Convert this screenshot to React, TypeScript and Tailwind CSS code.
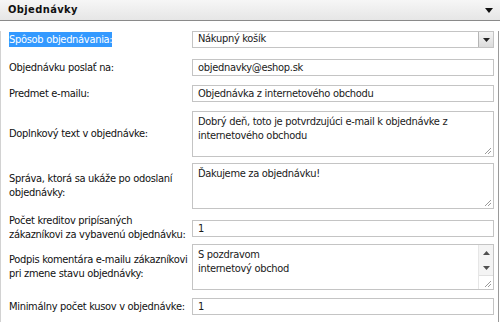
import React from "react";

const font = { fontFamily: '"DejaVu Sans Condensed", "DejaVu Sans", sans-serif' };

function Grip() {
  return (
    <svg className="absolute right-[1px] bottom-[1px]" width="9" height="9" viewBox="0 0 9 9">
      <path d="M8 2 L2 8 M8 5 L5 8" stroke="#9a9a9a" strokeWidth="1" />
    </svg>
  );
}

function Input({ value }: { value: string }) {
  return (
    <div className="w-[302px] h-[17px] border border-[#c4c4c4] bg-white px-[5px] text-[11px] leading-[15px] tracking-[-0.3px] text-[#1a1a1a]">
      {value}
    </div>
  );
}

function Area({ lines, scroll }: { lines: string[]; scroll?: boolean }) {
  return (
    <div className="relative w-[302px] h-[46px] border border-[#c4c4c4] bg-white px-[5px] pt-[3px] text-[11px] leading-[14px] tracking-[-0.3px] text-[#1a1a1a]">
      {lines.map((l, i) => (
        <div key={i}>{l}</div>
      ))}
      {scroll ? (
        <div className="absolute right-0 top-0 bottom-0 w-[15px] flex flex-col bg-[#f4f4f4] border-l border-[#e6e6e6]">
          <div className="h-[15px] flex items-center justify-center">
            <svg width="7" height="4" viewBox="0 0 7 4">
              <path d="M0 4 L3.5 0 L7 4 Z" fill="#505050" />
            </svg>
          </div>
          <div className="h-[15px] flex items-center justify-center">
            <svg width="7" height="4" viewBox="0 0 7 4">
              <path d="M0 0 L7 0 L3.5 4 Z" fill="#505050" />
            </svg>
          </div>
          <div className="flex-1 bg-white border-t border-[#e0e0e0]" />
        </div>
      ) : null}
      <Grip />
    </div>
  );
}

function Row({
  label,
  children,
  mt,
}: {
  label: React.ReactNode;
  children: React.ReactNode;
  mt: string;
}) {
  return (
    <div className={`flex items-center ${mt}`}>
      <div className="w-[191px] pl-[8px] whitespace-nowrap text-[11px] leading-[14px] tracking-[-0.3px] text-[#111]">
        {label}
      </div>
      {children}
    </div>
  );
}

export default function App() {
  return (
    <div className="w-[500px] h-[322px] bg-white overflow-hidden" style={font}>
      <div className="h-[21px] flex items-center justify-between pl-[8px] pr-[7px] bg-gradient-to-b from-[#f6f6f6] to-[#e6e6e6] border-b border-[#8a8a8a]">
        <span className="text-[11px] font-bold tracking-[0.4px] text-[#111]">Objednávky</span>
        <svg width="8" height="5" viewBox="0 0 8 5">
          <path d="M0 0 L8 0 L4 5 Z" fill="#111" />
        </svg>
      </div>
      <div className="h-[301px] border-l border-r border-[#d2d2d2] border-r-[#9a9a9a] mr-[1px]">
        <Row
          mt="mt-[10px]"
          label={<span className="bg-[#3399ff] text-white py-[1px]">Spôsob objednávania:</span>}
        >
          <div className="w-[302px] h-[17px] border border-[#c4c4c4] bg-white pl-[5px] flex items-center justify-between text-[11px] tracking-[-0.3px] text-[#1a1a1a]">
            <span>Nákupný košík</span>
            <div className="w-[15px] h-[15px] bg-gradient-to-b from-[#f4f4f4] to-[#dcdcdc] border-l border-[#b5b5b5] flex items-center justify-center">
              <svg width="7" height="4" viewBox="0 0 7 4">
                <path d="M0 0 L7 0 L3.5 4 Z" fill="#222" />
              </svg>
            </div>
          </div>
        </Row>
        <Row mt="mt-[11px]" label="Objednávku poslať na:">
          <Input value="objednavky@eshop.sk" />
        </Row>
        <Row mt="mt-[9px]" label="Predmet e-mailu:">
          <Input value="Objednávka z internetového obchodu" />
        </Row>
        <Row mt="mt-[9px]" label="Doplnkový text v objednávke:">
          <Area lines={["Dobrý deň, toto je potvrdzujúci e-mail k objednávke z", "internetového obchodu"]} />
        </Row>
        <Row
          mt="mt-[6px]"
          label={
            <>
              Správa, ktorá sa ukáže po odoslaní
              <br />
              objednávky:
            </>
          }
        >
          <Area lines={["Ďakujeme za objednávku!"]} />
        </Row>
        <Row
          mt="mt-[5px]"
          label={
            <>
              Počet kreditov pripísaných
              <br />
              zákazníkovi za vybavenú objednávku:
            </>
          }
        >
          <Input value="1" />
        </Row>
        <Row
          mt="mt-[2px]"
          label={
            <>
              Podpis komentára e-mailu zákazníkovi
              <br />
              pri zmene stavu objednávky:
            </>
          }
        >
          <Area lines={["S pozdravom", "internetový obchod"]} scroll />
        </Row>
        <Row mt="mt-[8px]" label="Minimálny počet kusov v objednávke:">
          <Input value="1" />
        </Row>
      </div>
    </div>
  );
}
